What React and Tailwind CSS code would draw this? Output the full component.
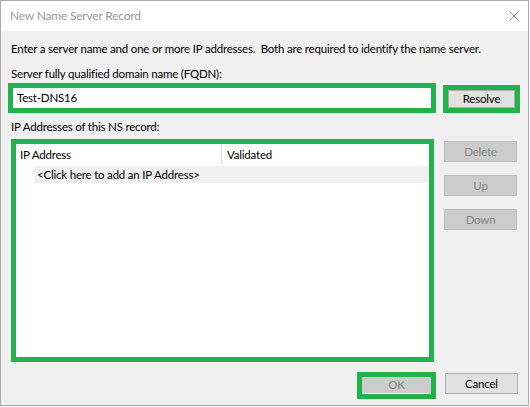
import React from 'react';

const GREEN = 'border-[5px] border-[#22b14c]';

function SideButton({ children, className = '' }) {
  return (
    <div className={`flex h-[21px] w-[73px] items-center justify-center border border-[#bfbfbf] bg-[#cccccc] text-[#838383] ${className}`}>
      {children}
    </div>
  );
}

export default function App() {
  return (
    <div className="h-[407px] w-[530px] overflow-hidden whitespace-nowrap bg-white font-['Lato','Liberation_Sans',sans-serif] text-[11.5px] leading-[16px] tracking-[-0.2px] text-black">
      <div className="flex h-[406px] w-[529px] flex-col border border-[#aaaaaa] bg-[#f0f0f0]">
        {/* title bar */}
        <div className="flex h-[30px] shrink-0 items-center justify-between bg-white pl-[9px] pr-[9px]">
          <span className="text-[12px] text-[#999999]">New Name Server Record</span>
          <svg width="10" height="10" viewBox="0 0 10 10" className="text-[#8a8a8a]">
            <path d="M0.5 0.5 L9.5 9.5 M9.5 0.5 L0.5 9.5" stroke="currentColor" strokeWidth="1" fill="none" />
          </svg>
        </div>

        <div className="flex flex-1 flex-col">
          <p className="ml-[10px] mt-[10px]">
            Enter a server name and one or more IP addresses.&nbsp; Both are required to identify the name server.
          </p>
          <p className="ml-[10px] mt-[9px]">Server fully qualified domain name (FQDN):</p>

          <div className="mt-[1px] flex items-end">
            <div className={`ml-[7px] flex h-[30px] w-[428px] items-center bg-white pl-[4px] ${GREEN}`}>
              Test-DNS16
            </div>
            <div className={`ml-[7px] flex h-[28px] w-[77px] ${GREEN}`}>
              <div className="flex flex-1 items-center justify-center border border-[#adadad] bg-[#e1e1e1]">Resolve</div>
            </div>
          </div>

          <p className="ml-[10px] mt-[6px]">IP Addresses of this NS record:</p>

          <div className="mt-[4px] flex items-start">
            <div className={`ml-[10px] flex h-[223px] w-[423px] flex-col bg-white ${GREEN}`}>
              <div className="flex h-[22px] shrink-0">
                <div className="flex w-[206px] items-center border-r border-[#e5e5e5] pl-[4px]">IP Address</div>
                <div className="flex flex-1 items-center pl-[5px]">Validated</div>
              </div>
              <div className="ml-[18px] flex h-[17px] items-center bg-[#f0f0f0] pl-[3px]">
                &lt;Click here to add an IP Address&gt;
              </div>
            </div>
            <div className="ml-[10px] mt-[2px] flex flex-col gap-[13px]">
              <SideButton>Delete</SideButton>
              <SideButton>Up</SideButton>
              <SideButton>Down</SideButton>
            </div>
          </div>

          <div className="mt-[10px] flex items-start justify-end pr-[10px]">
            <div className={`flex h-[27px] w-[79px] ${GREEN}`}>
              <div className="flex flex-1 items-center justify-center border-b border-white bg-[#cccccc] text-[#838383]">OK</div>
            </div>
            <div className="ml-[9px] mt-[1px] flex h-[21px] w-[73px] items-center justify-center border border-[#adadad] bg-[#e1e1e1]">
              Cancel
            </div>
          </div>
        </div>
      </div>
    </div>
  );
}
